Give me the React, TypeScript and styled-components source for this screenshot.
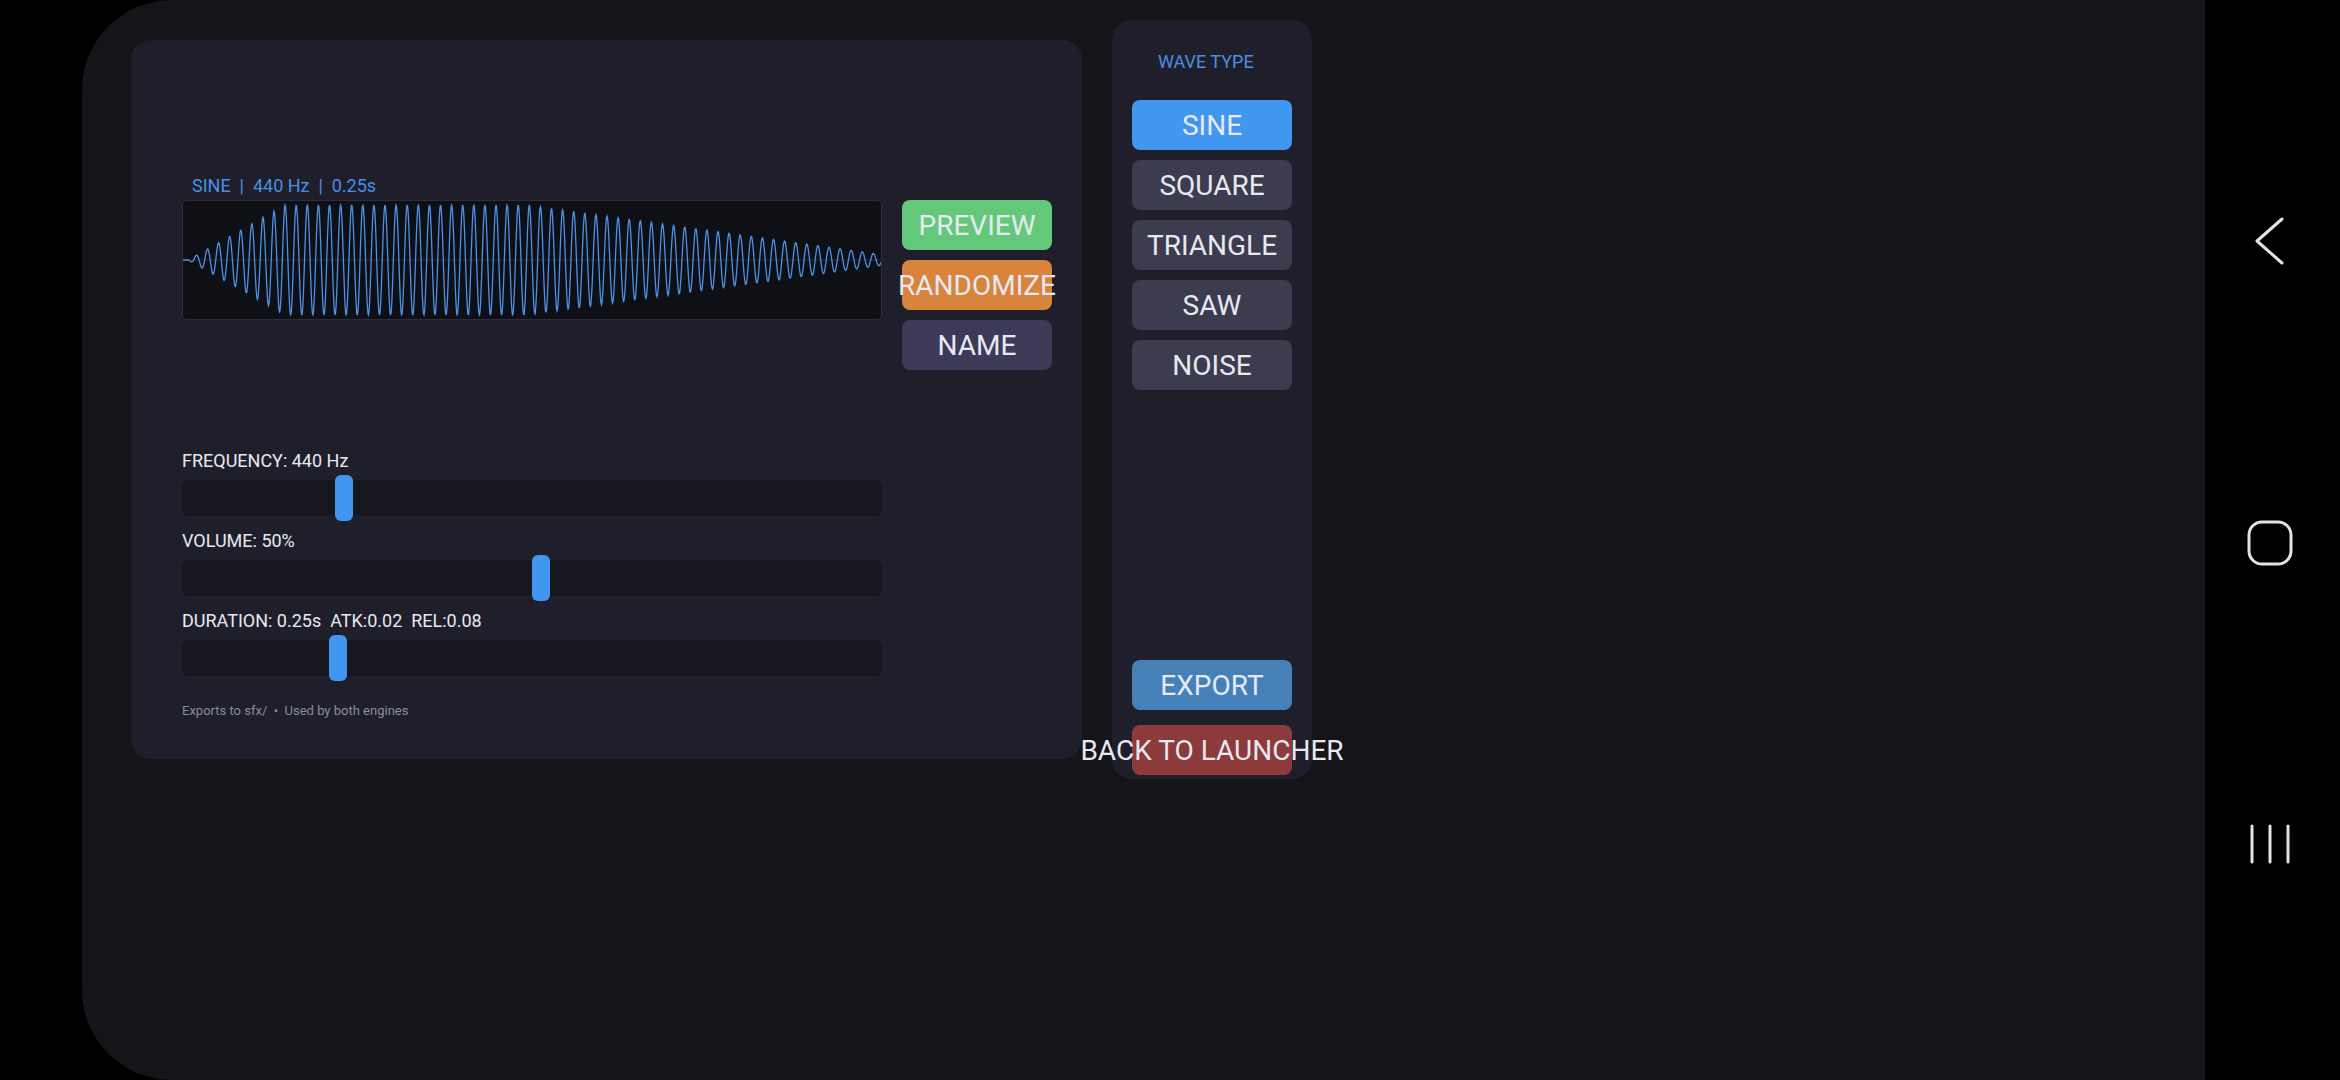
import React from 'react'
import styled, { createGlobalStyle } from 'styled-components'

const GlobalStyle = createGlobalStyle`
  * {
    box-sizing: border-box;
  }
  html,
  body {
    margin: 0;
    padding: 0;
    background: #000;
  }
  body {
    font-family: Roboto, 'Liberation Sans', sans-serif;
    overflow: hidden;
  }
`

interface SliderSpec {
  label: string
  value: number
  min: number
  max: number
}

const sliders: SliderSpec[] = [
  { label: 'FREQUENCY: 440 Hz', value: 440, min: 60, max: 1800 },
  { label: 'VOLUME: 50%', value: 50, min: 0, max: 100 },
  { label: 'DURATION: 0.25s  ATK:0.02  REL:0.08', value: 0.25, min: 0.05, max: 1 },
]

const waveTypes = ['SINE', 'SQUARE', 'TRIANGLE', 'SAW', 'NOISE']
const TRACK_WIDTH = 700

const envelope = (t: number) => {
  if (t < 0.14) return t / 0.14
  if (t < 0.49) return 1
  return 1 - ((t - 0.49) / 0.51) * 0.9
}

const buildWave = (w: number, h: number) => {
  const mid = h / 2
  const amp = 55
  const x0 = 5
  const len = w - x0
  const period = 11.1
  let d = `M0 ${mid} L${x0} ${mid}`
  for (let x = x0; x <= w; x += 0.5) {
    const t = (x - x0) / len
    const y = mid + amp * envelope(t) * Math.sin((2 * Math.PI * (x - x0)) / period)
    d += ` L${x.toFixed(1)} ${y.toFixed(2)}`
  }
  return d
}

const Waveform = () => (
  <svg width='698' height='118' viewBox='0 0 698 118'>
    <line x1='0' y1='59' x2='698' y2='59' stroke='#2b2b3a' strokeWidth='1' />
    <path d={buildWave(698, 118)} fill='none' stroke='#4b92e6' strokeWidth='1.3' />
  </svg>
)

const Slider = ({ label, value, min, max }: SliderSpec) => (
  <SliderBlock>
    <SliderLabel>{label}</SliderLabel>
    <Track>
      <Thumb style={{ left: ((value - min) / (max - min)) * TRACK_WIDTH }} />
    </Track>
  </SliderBlock>
)

const App = () => (
  <Device>
    <GlobalStyle />
    <Screen>
      <Editor>
        <WaveInfo>{'SINE  |  440 Hz  |  0.25s'}</WaveInfo>
        <WaveRow>
          <WaveBox>
            <Waveform />
          </WaveBox>
          <Actions>
            <ActionButton $bg='#63c879'>PREVIEW</ActionButton>
            <ActionButton $bg='#d8843c'>RANDOMIZE</ActionButton>
            <ActionButton $bg='#3c3a56'>NAME</ActionButton>
          </Actions>
        </WaveRow>
        <Sliders>
          {sliders.map(s => (
            <Slider key={s.label} {...s} />
          ))}
        </Sliders>
        <Footer>{'Exports to sfx/  •  Used by both engines'}</Footer>
      </Editor>

      <WavePanel>
        <PanelTitle>WAVE TYPE</PanelTitle>
        <WaveList>
          {waveTypes.map(w => (
            <PanelButton key={w} $bg={w === 'SINE' ? '#4196f0' : '#3c3c4e'}>
              {w}
            </PanelButton>
          ))}
        </WaveList>
        <Spacer />
        <PanelButton $bg='#4580b9'>EXPORT</PanelButton>
        <BackButton $bg='#8c3a3a'>BACK TO LAUNCHER</BackButton>
      </WavePanel>
    </Screen>

    <NavBar>
      <NavIcon>
        <svg width='32' height='48' viewBox='0 0 32 48'>
          <polyline
            points='28,2 3,24 28,46'
            fill='none'
            stroke='currentColor'
            strokeWidth='3'
            strokeLinecap='round'
            strokeLinejoin='round'
          />
        </svg>
      </NavIcon>
      <NavIcon>
        <svg width='46' height='46' viewBox='0 0 46 46'>
          <rect x='2' y='2' width='42' height='42' rx='13' fill='none' stroke='currentColor' strokeWidth='3' />
        </svg>
      </NavIcon>
      <NavIcon>
        <svg width='42' height='42' viewBox='0 0 42 42'>
          <g stroke='currentColor' strokeWidth='3' strokeLinecap='round'>
            <line x1='3' y1='3' x2='3' y2='39' />
            <line x1='21' y1='3' x2='21' y2='39' />
            <line x1='39' y1='3' x2='39' y2='39' />
          </g>
        </svg>
      </NavIcon>
    </NavBar>
  </Device>
)

const Device = styled.div`
  display: flex;
  width: 2340px;
  height: 1080px;
  background: #000;
`

const Screen = styled.main`
  display: flex;
  align-items: flex-start;
  gap: 30px;
  margin-left: 82px;
  width: 2123px;
  height: 1080px;
  padding: 20px 0 0 49px;
  background: #141419;
  border-radius: 90px 0 0 90px;
`

const Editor = styled.section`
  display: flex;
  flex-direction: column;
  width: 951px;
  height: 719px;
  margin-top: 20px;
  padding: 135px 0 0 51px;
  background: #1f1f2b;
  border-radius: 20px;
`

const WaveInfo = styled.div`
  margin: 0 0 4px 10px;
  font-size: 18px;
  line-height: 21px;
  color: #4a90e2;
  white-space: pre;
`

const WaveRow = styled.div`
  display: flex;
  align-items: flex-start;
  gap: 20px;
`

const WaveBox = styled.div`
  width: 700px;
  height: 120px;
  border: 1px solid #2d2d3b;
  border-radius: 5px;
  background: #0f0f16;
  overflow: hidden;

  > svg {
    display: block;
  }
`

const Actions = styled.div`
  display: flex;
  flex-direction: column;
  gap: 10px;
  width: 150px;
`

const ButtonBase = styled.button<{ $bg: string }>`
  all: unset;
  display: flex;
  align-items: center;
  justify-content: center;
  height: 50px;
  border-radius: 8px;
  background: ${({ $bg }) => $bg};
  color: #e6e8f2;
  font-family: Roboto, 'Liberation Sans', sans-serif;
  font-size: 28px;
  white-space: nowrap;
  cursor: pointer;
`

const ActionButton = styled(ButtonBase)`
  width: 150px;
`

const Sliders = styled.div`
  display: flex;
  flex-direction: column;
  gap: 14px;
  margin-top: 80px;
`

const SliderBlock = styled.div`
  display: flex;
  flex-direction: column;
  gap: 8px;
`

const SliderLabel = styled.div`
  font-size: 18px;
  line-height: 22px;
  color: #e8e8ef;
  white-space: pre;
`

const Track = styled.div`
  position: relative;
  width: ${TRACK_WIDTH}px;
  height: 36px;
  border-radius: 6px;
  background: #16161f;
`

const Thumb = styled.div`
  position: absolute;
  top: -5px;
  width: 18px;
  height: 46px;
  border-radius: 6px;
  background: #4196f0;
`

const Footer = styled.div`
  margin-top: 27px;
  font-size: 13px;
  line-height: 16px;
  color: #8b8b9a;
  white-space: pre;
`

const WavePanel = styled.aside`
  display: flex;
  flex-direction: column;
  width: 200px;
  height: 759px;
  padding: 31px 20px 4px;
  background: #1f1f2b;
  border-radius: 20px;
`

const PanelTitle = styled.div`
  padding-left: 26px;
  margin-bottom: 28px;
  font-size: 18px;
  line-height: 21px;
  color: #4a90e2;
`

const WaveList = styled.div`
  display: flex;
  flex-direction: column;
  gap: 10px;
`

const PanelButton = styled(ButtonBase)`
  width: 160px;
`

const BackButton = styled(PanelButton)`
  margin-top: 15px;
`

const Spacer = styled.div`
  flex: 1;
`

const NavBar = styled.nav`
  flex: 1;
  display: flex;
  flex-direction: column;
  align-items: center;
  justify-content: space-between;
  padding: 211px 5px 206px 0;
`

const NavIcon = styled.div`
  display: flex;
  align-items: center;
  justify-content: center;
  width: 60px;
  height: 60px;
  color: #e2e2e2;
`

export default App
